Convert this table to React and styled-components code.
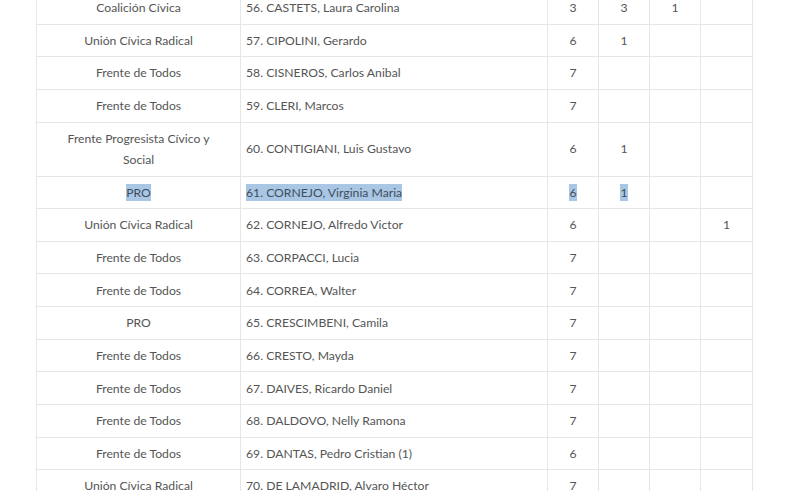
import styled, { createGlobalStyle } from "styled-components";

const GlobalStyle = createGlobalStyle`
  html, body {
    margin: 0;
    padding: 0;
    background: #fff;
    overflow: hidden;
  }
  body {
    font-family: Lato, "Open Sans", sans-serif;
  }
`;

const rows = [
  { party: "Coalición Cívica", name: "56. CASTETS, Laura Carolina", a: "3", b: "3", c: "1" },
  { party: "Unión Cívica Radical", name: "57. CIPOLINI, Gerardo", a: "6", b: "1" },
  { party: "Frente de Todos", name: "58. CISNEROS, Carlos Anibal", a: "7" },
  { party: "Frente de Todos", name: "59. CLERI, Marcos", a: "7" },
  { party: "Frente Progresista Cívico y Social", name: "60. CONTIGIANI, Luis Gustavo", a: "6", b: "1", tall: true },
  { party: "PRO", name: "61. CORNEJO, Virginia Maria", a: "6", b: "1", selected: true },
  { party: "Unión Cívica Radical", name: "62. CORNEJO, Alfredo Victor", a: "6", d: "1" },
  { party: "Frente de Todos", name: "63. CORPACCI, Lucia", a: "7" },
  { party: "Frente de Todos", name: "64. CORREA, Walter", a: "7" },
  { party: "PRO", name: "65. CRESCIMBENI, Camila", a: "7" },
  { party: "Frente de Todos", name: "66. CRESTO, Mayda", a: "7" },
  { party: "Frente de Todos", name: "67. DAIVES, Ricardo Daniel", a: "7" },
  { party: "Frente de Todos", name: "68. DALDOVO, Nelly Ramona", a: "7" },
  { party: "Frente de Todos", name: "69. DANTAS, Pedro Cristian (1)", a: "6" },
  { party: "Unión Cívica Radical", name: "70. DE LAMADRID, Alvaro Héctor", a: "7" },
];

export default function App() {
  return (
    <>
      <GlobalStyle />
      <Page>
        <Table>
          <colgroup>
            <col style={{ width: 204 }} />
            <col style={{ width: 307 }} />
            <col style={{ width: 51 }} />
            <col style={{ width: 51 }} />
            <col style={{ width: 51 }} />
            <col style={{ width: 52 }} />
          </colgroup>
          <tbody>
            {rows.map((r) => (
              <Row key={r.name}>
                <PartyCell>
                  {r.tall ? (
                    <Wrap>{r.party}</Wrap>
                  ) : (
                    <Mark selected={r.selected}>{r.party}</Mark>
                  )}
                </PartyCell>
                <NameCell>
                  <Mark selected={r.selected}>{r.name}</Mark>
                </NameCell>
                <NumCell>
                  <Mark selected={r.selected}>{r.a}</Mark>
                </NumCell>
                <NumCell>
                  {r.b && <Mark selected={r.selected}>{r.b}</Mark>}
                </NumCell>
                <NumCell>{r.c}</NumCell>
                <NumCell>{r.d}</NumCell>
              </Row>
            ))}
          </tbody>
        </Table>
      </Page>
    </>
  );
}

const Page = styled.div`
  width: 785px;
  height: 491px;
  overflow: hidden;
  padding-left: 36px;
  box-sizing: border-box;
`;

const Table = styled.table`
  margin-top: -9px;
  border-collapse: collapse;
  table-layout: fixed;
  width: 717px;
  color: #555;
  font-size: 12.2px;
`;

const Row = styled.tr``;

const Cell = styled.td`
  border: 1px solid #e6e6e6;
  padding: 5.17px 8px;
  line-height: 21.33px;
  vertical-align: middle;
`;

const PartyCell = styled(Cell)`
  text-align: center;
`;

const NameCell = styled(Cell)`
  text-align: left;
  padding-left: 5px;
`;

const NumCell = styled(Cell)`
  text-align: center;
`;

const Wrap = styled.div`
  padding: 0 14px;
`;

const Mark = styled.span`
  background: ${({ selected }) => (selected ? "#a9c7e4" : "transparent")};
  color: ${({ selected }) => (selected ? "#3f4d5c" : "inherit")};
  padding: 1px 0;
`;
